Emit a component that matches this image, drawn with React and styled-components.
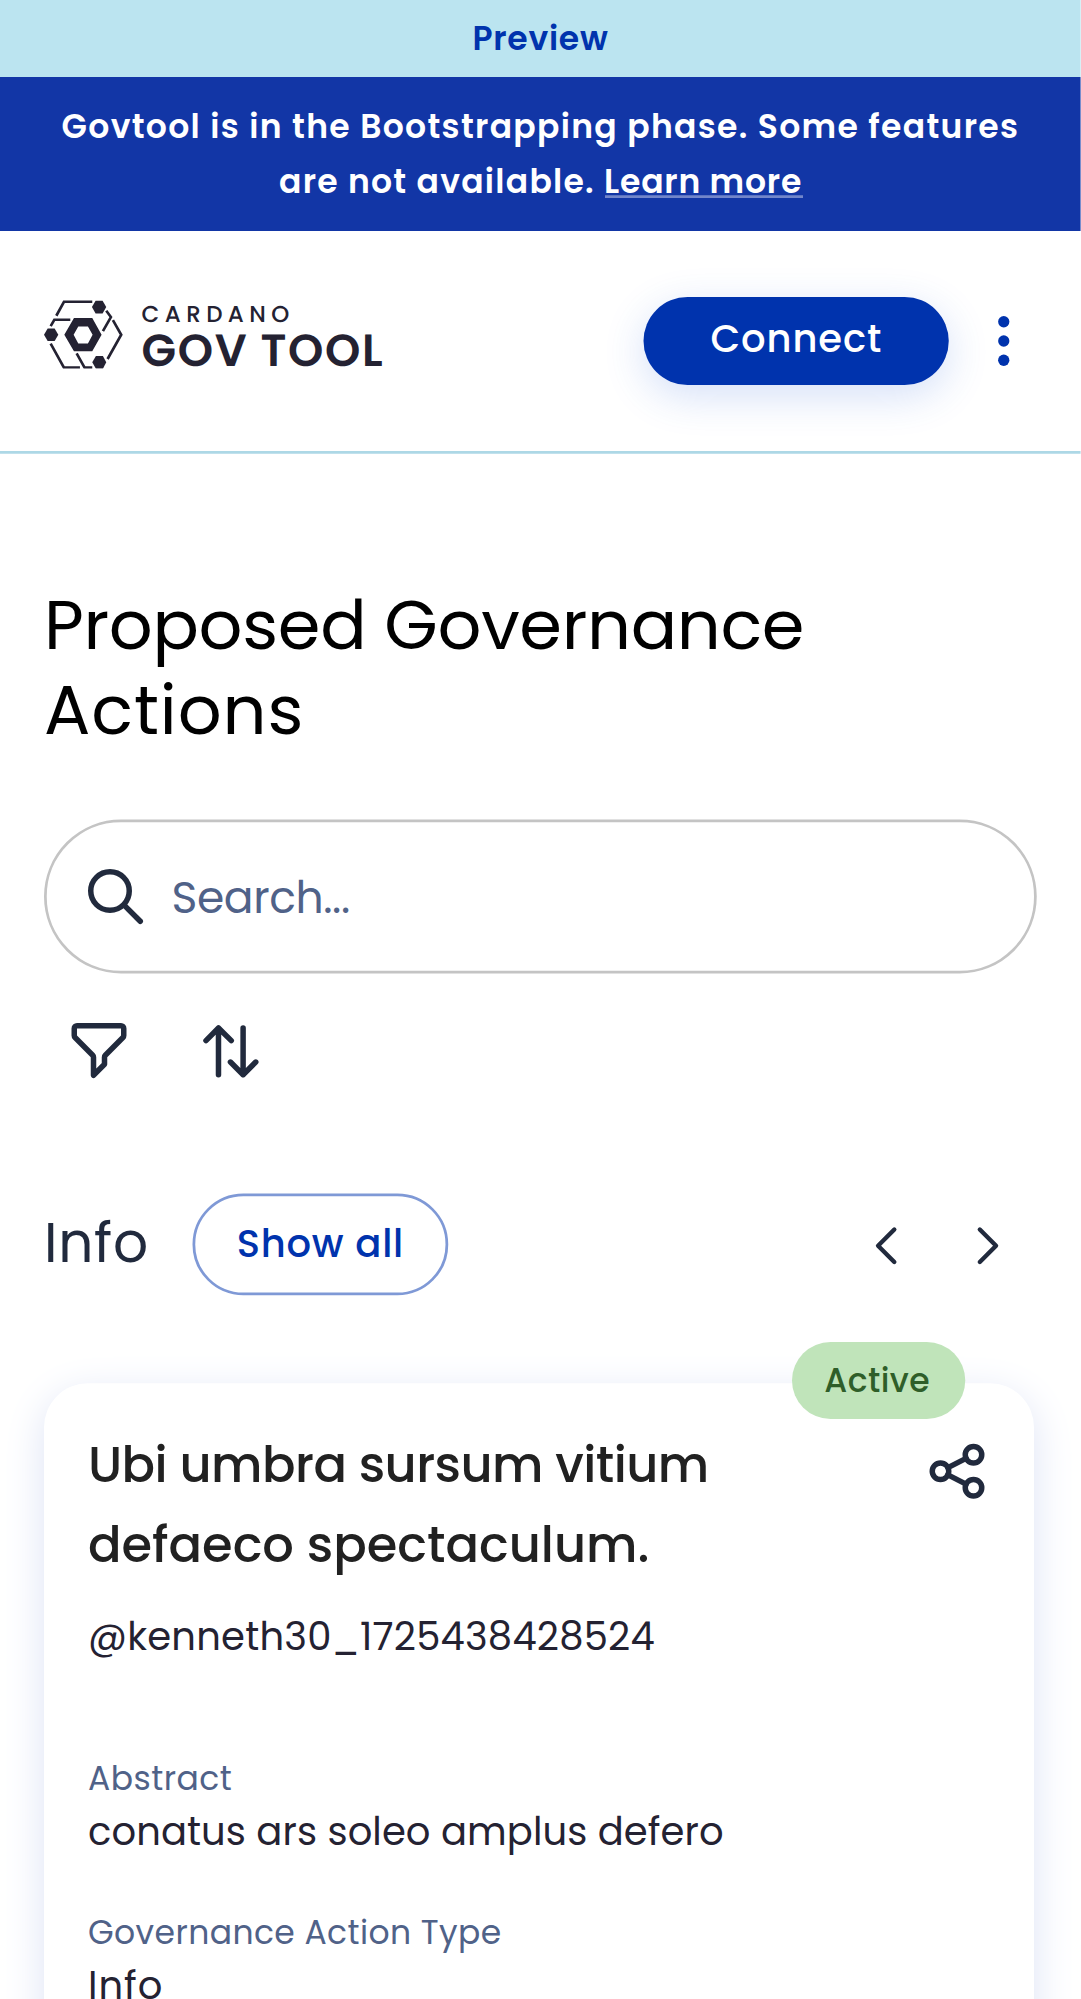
import React from "react";
import styled, { createGlobalStyle } from "styled-components";

const GlobalStyle = createGlobalStyle`
  *, *::before, *::after { box-sizing: border-box; }
  body {
    margin: 0;
    background: #fff;
    font-family: "Poppins", "Inter", "Open Sans", sans-serif;
    overflow: hidden;
  }
  h1, h2, h3, p { margin: 0; font-weight: 400; }
  button { font: inherit; border: 0; background: none; padding: 0; cursor: pointer; }
`;

const ink = "#212a3d";
const blue = "#0033ad";

/* Mobile layout, 393px wide, enlarged to the density of a phone screen. */
const Viewport = styled.div`
  height: 1999px;
  overflow: hidden;
`;

const Page = styled.div`
  width: 393.1px;
  height: 727px;
  overflow: hidden;
  background: #fff;
  transform: scale(2.75);
  transform-origin: 0 0;
`;

const T = styled.span`
  display: block;
  white-space: nowrap;
  letter-spacing: ${(p) => p.$ls || 0}px;
`;

const NetworkBar = styled.div`
  height: 28px;
  display: flex;
  align-items: center;
  justify-content: center;
  background: #bbe4f0;
  color: ${blue};
  font-size: 12px;
  font-weight: 600;
`;

const Banner = styled.div`
  height: 56px;
  padding-top: 8px;
  background: #1236a6;
  color: #fff;
  font-size: 12px;
  line-height: 20px;
  font-weight: 600;
  display: flex;
  flex-direction: column;
  align-items: center;
`;

const LearnMore = styled.a`
  display: inline-block;
  color: #fff;
  line-height: 10px;
  letter-spacing: 0.28px;
  border-bottom: 1px solid #7286ca;
`;

const Header = styled.header`
  height: 81px;
  padding: 24px 16px 0;
  border-bottom: 1px solid #add8e6;
  display: flex;
  align-items: flex-start;
  justify-content: space-between;
`;

const Logo = styled.div`
  display: flex;
  gap: 6.8px;
  margin-top: 0.6px;
  color: #242232;
`;

const Wordmark = styled.div`
  display: flex;
  flex-direction: column;
  text-rendering: geometricPrecision;
`;

const BrandTop = styled(T)`
  font-size: 8.36px;
  line-height: 10.5px;
  font-weight: 500;
`;

const BrandMain = styled(T)`
  font-size: 16.36px;
  line-height: 17px;
  font-weight: 600;
`;

const HeaderActions = styled.div`
  display: flex;
  align-items: center;
  gap: 8px;
`;

const ConnectButton = styled.button`
  && {
    width: 111px;
    height: 32px;
    border-radius: 16px;
    background: ${blue};
    color: #fff;
    font-size: 14px;
    font-weight: 500;
    padding-bottom: 1.5px;
    display: flex;
    align-items: center;
    justify-content: center;
    box-shadow: 0 4px 15px rgba(47, 98, 220, 0.2);
  }
`;

const MenuDots = styled.svg`
  display: block;
  width: 24px;
  height: 24px;
  fill: ${blue};
`;

const Main = styled.main`
  padding: 47px 16px 0;
`;

const Title = styled.h1`
  font-size: 25px;
  line-height: 31px;
  color: #000;
`;

const SearchBox = styled.div`
  height: 56px;
  margin-top: 24px;
  padding-left: 13px;
  width: 361px;
  border: 1px solid #c4c4c4;
  border-radius: 28px;
  display: flex;
  align-items: center;
  gap: 8.4px;
  color: #506288;
  font-size: 16px;
`;

const Toolbar = styled.div`
  display: flex;
  gap: 24px;
  margin-top: 16px;
  padding-left: 8px;
`;

const Icon = styled.svg`
  display: block;
  flex: none;
  width: 24px;
  height: 24px;
  fill: none;
  stroke: ${ink};
  stroke-width: ${(p) => p.$stroke || 2};
  stroke-linecap: round;
  stroke-linejoin: round;
`;

const SectionHead = styled.div`
  height: 37px;
  margin-top: 40px;
  display: flex;
  align-items: center;
`;

const SectionTitle = styled.h2`
  font-size: 20px;
  line-height: 22px;
  width: 54px;
  padding-bottom: 1px;
  color: ${ink};
`;

const ShowAll = styled.button`
  && {
    width: 93px;
    height: 37px;
    border: 1px solid #7f99d6;
    border-radius: 18.5px;
    color: ${blue};
    font-size: 14px;
    font-weight: 500;
    display: flex;
    align-items: center;
    justify-content: center;
  }
`;

const Arrows = styled.div`
  margin: 1px 6px 0 auto;
  display: flex;
  gap: 13px;
`;

const Card = styled.article`
  position: relative;
  width: 360px;
  height: 300px;
  margin-top: 32px;
  padding: 15px 16px;
  border-radius: 16px;
  background: #fff;
  box-shadow: 0 4px 15px #dde3f5;
`;

const Status = styled.div`
  position: absolute;
  top: -15px;
  right: 25px;
  width: 63px;
  height: 28px;
  padding-right: 1px;
  border-radius: 14px;
  background: #c0e4ba;
  color: #2f5e29;
  font-size: 12px;
  font-weight: 500;
  display: flex;
  align-items: center;
  justify-content: center;
`;

const CardTop = styled.div`
  display: flex;
  justify-content: space-between;
  align-items: flex-start;
`;

const CardTitle = styled.h3`
  font-size: 18px;
  line-height: 29px;
  font-weight: 500;
  color: #212121;
`;

const ShareButton = styled.button`
  && {
    margin-top: 5px;
  }
`;

const Handle = styled.p`
  margin-top: 8.7px;
  margin-bottom: 33.4px;
  font-size: 14px;
  line-height: 20px;
  color: #242232;
`;

const Field = styled.div`
  margin-bottom: 17.6px;
`;

const Label = styled.p`
  font-size: 12px;
  line-height: 18px;
  color: #506288;
`;

const Value = styled.p`
  font-size: 14px;
  line-height: 20.4px;
  color: #242232;
`;

const LogoMark = () => (
  <svg width="28.7" height="25.45" viewBox="42 57 237 210" fill="none" stroke="currentColor" strokeWidth="8">
    <path d="M79 105 102 63H187M229 90 243 109 219 151M62 136 73 117H121M62 189 102 261H150M140 218 164 261H187M249 118 274 162 233 235" />
    <g fill="currentColor" stroke="none">
      <path d="M186 79 197 60H218L229 79 218 98H197Z" />
      <path d="M42 162 53 143H74L85 162 74 181H53Z" />
      <path d="M187 245 198 226H219L229 245 219 264H198Z" />
      <path fillRule="evenodd" d="M103 162 132 112H187L215 162 187 212H132ZM131 162 145 188H174L188 162 174 137H145Z" />
    </g>
  </svg>
);

export default function App() {
  return (
    <Viewport>
      <GlobalStyle />
      <Page>
        <NetworkBar><T $ls={0.27}>Preview</T></NetworkBar>
        <Banner>
          <T $ls={0.48}>Govtool is in the Bootstrapping phase. Some features</T>
          <T $ls={0.46}>are not available. <LearnMore>Learn more</LearnMore></T>
        </Banner>
        <Header>
          <Logo>
            <LogoMark />
            <Wordmark>
              <BrandTop $ls={1.98}>CARDANO</BrandTop>
              <BrandMain $ls={0.58}>GOV TOOL</BrandMain>
            </Wordmark>
          </Logo>
          <HeaderActions>
            <ConnectButton><T $ls={0.33}>Connect</T></ConnectButton>
            <MenuDots viewBox="0 0 24 24">
              <circle cx="12" cy="5" r="2.05" />
              <circle cx="12" cy="12" r="2.05" />
              <circle cx="12" cy="19" r="2.05" />
            </MenuDots>
          </HeaderActions>
        </Header>
        <Main>
          <Title>
            <T $ls={-0.12}>Proposed Governance</T>
            <T $ls={0.33}>Actions</T>
          </Title>
          <SearchBox>
            <Icon viewBox="0 0 24 24">
              <circle cx="10" cy="10" r="7" />
              <path d="M15.5 15.5 21 21" />
            </Icon>
            <T $ls={-0.15}>Search...</T>
          </SearchBox>
          <Toolbar>
            <Icon viewBox="0 0 24 24">
              <path d="M3 4a1 1 0 0 1 1-1h16a1 1 0 0 1 1 1v2.586a1 1 0 0 1-.293.707l-6.414 6.414a1 1 0 0 0-.293.707V17l-4 4v-6.586a1 1 0 0 0-.293-.707L3.293 7.293A1 1 0 0 1 3 6.586V4z" />
            </Icon>
            <Icon viewBox="0 0 24 24">
              <path d="M7.45 20.8V3.8M2.9 8.4 7.45 3.8 12.1 8.4M16.4 3.8V20.8M11.8 16.2 16.4 20.8 21 16.2" />
            </Icon>
          </Toolbar>
          <SectionHead>
            <SectionTitle><T $ls={0.25}>Info</T></SectionTitle>
            <ShowAll><T $ls={0.29}>Show all</T></ShowAll>
            <Arrows>
              <Icon viewBox="0 0 24 24" $stroke={1.6}><path d="M15.2 6.1 9.3 12 15.2 17.9" /></Icon>
              <Icon viewBox="0 0 24 24" $stroke={1.6}><path d="M9.3 6.1 15.2 12 9.3 17.9" /></Icon>
            </Arrows>
          </SectionHead>
          <Card>
            <Status><T $ls={0.16}>Active</T></Status>
            <CardTop>
              <CardTitle>
                <T $ls={-0.2}>Ubi umbra sursum vitium</T>
                <T>defaeco spectaculum.</T>
              </CardTitle>
              <ShareButton aria-label="Share">
                <Icon viewBox="0 0 24 24">
                  <circle cx="6" cy="12" r="3" />
                  <circle cx="18" cy="6" r="3" />
                  <circle cx="18" cy="18" r="3" />
                  <path d="M8.7 10.7 15.3 7.3M8.7 13.3 15.3 16.7" />
                </Icon>
              </ShareButton>
            </CardTop>
            <Handle><T $ls={0.08}>@kenneth30_1725438428524</T></Handle>
            <Field>
              <Label><T $ls={0.17}>Abstract</T></Label>
              <Value><T $ls={0.03}>conatus ars soleo amplus defero</T></Value>
            </Field>
            <Field>
              <Label><T $ls={0.15}>Governance Action Type</T></Label>
              <Value><T $ls={0.35}>Info</T></Value>
            </Field>
          </Card>
        </Main>
      </Page>
    </Viewport>
  );
}
